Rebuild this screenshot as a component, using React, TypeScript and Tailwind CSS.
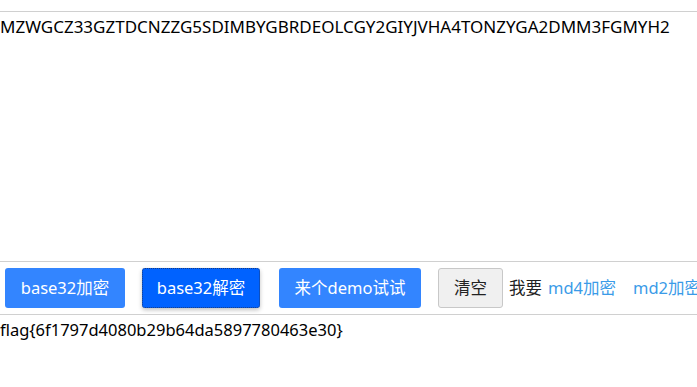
import { useState } from "react";

const font = {
  fontFamily: '"Noto Sans", "Noto Sans CJK SC", sans-serif',
};

export default function App() {
  const [input] = useState(
    "MZWGCZ33GZTDCNZZG5SDIMBYGBRDEOLCGY2GIYJVHA4TONZYGA2DMM3FGMYH2"
  );
  const [output] = useState("flag{6f1797d4080b29b64da5897780463e30}");

  return (
    <div className="w-[697px] h-[387px] overflow-hidden bg-white text-black" style={font}>
      <div className="mt-[11px] h-[251px] border-t border-b border-[#d0d0d0] pt-[3px] text-[17px] leading-[24px] whitespace-nowrap">
        {input}
      </div>
      <div className="flex items-center h-[52px] whitespace-nowrap text-[16.5px] overflow-hidden">
        <button className="shrink-0 ml-[5px] w-[120px] h-[40px] rounded-[3px] bg-[#3385ff] text-white">
          base32加密
        </button>
        <button className="shrink-0 ml-[17px] w-[118px] h-[40px] rounded-[3px] bg-[#0062ff] text-white border border-dotted border-[#1a3d80] shadow-[0_2px_4px_rgba(0,0,0,0.25)]">
          base32解密
        </button>
        <button className="shrink-0 ml-[19px] w-[142px] h-[40px] rounded-[3px] bg-[#3385ff] text-white">
          来个demo试试
        </button>
        <button className="shrink-0 ml-[17px] w-[65px] h-[40px] rounded-[3px] bg-[#f0f0f0] border border-[#c8c8c8] text-[#222]">
          清空
        </button>
        <span className="shrink-0 ml-[6px] text-[#222]">我要</span>
        <a className="shrink-0 ml-[6px] text-[#3a9be8]">md4加密</a>
        <a className="shrink-0 ml-[17px] text-[#3a9be8]">md2加密</a>
      </div>
      <div className="border-t border-[#d0d0d0] pt-[3px] text-[16.5px] leading-[24px] whitespace-nowrap">
        {output}
      </div>
    </div>
  );
}
